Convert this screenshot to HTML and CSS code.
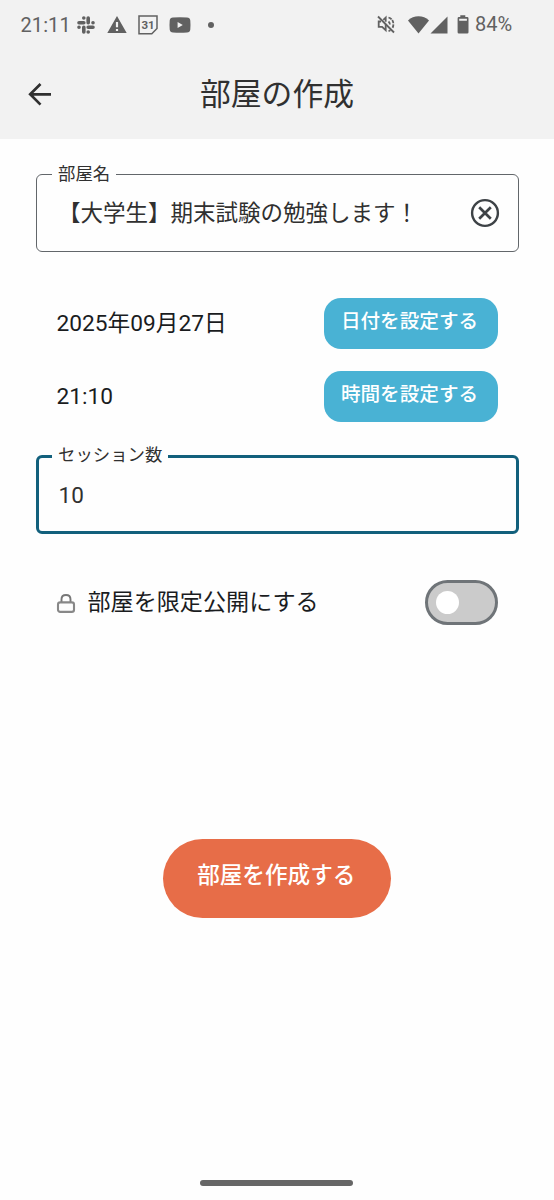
FILE: index.html
```html
<!DOCTYPE html>
<html lang="ja">
<head>
<meta charset="utf-8">
<title>部屋の作成</title>
<link rel="stylesheet" href="styles.css">
</head>
<body>
<div class="screen">
  <header class="top">
    <div class="status">
      <div class="status-left">
        <span class="clock">21:11</span>
        <svg class="i-slack" width="18" height="18" viewBox="0 0 18 18" fill="none" stroke="currentColor" stroke-width="3.6" stroke-linecap="round">
          <path d="M6.800 6.800H2M11.200 6.800V2M11.200 11.200H16M6.800 11.200V16"/>
          <path d="M6.800 2h.01M16 6.800h.01M11.200 16h.01M2 11.200h.01"/>
        </svg>
        <svg class="i-warn" width="20" height="17" viewBox="0 0 20 17"><path fill="currentColor" fill-rule="evenodd" d="M10 0 19.700 17H.3zM8.900 6v5.300h2.200V6zm0 6.900v2.100h2.200v-2.100z"/></svg>
        <svg class="i-cal" width="20" height="20" viewBox="0 0 20 20"><path d="M1 1h18v12.500l-5.200 5.200H1z" fill="none" stroke="currentColor" stroke-width="1.500"/><text x="10" y="14" text-anchor="middle" class="cal-num">31</text></svg>
        <svg class="i-video" width="22" height="16" viewBox="0 0 22 16"><path fill="currentColor" fill-rule="evenodd" d="M4 .6Q11 0 18 .6q3 .2 3.300 3 .4 4.400 0 8.800-.3 2.800-3.300 3-7 .6-14 0-3-.2-3.300-3-.4-4.400 0-8.800Q1 .8 4 .6zM8.600 5v6l5.200-3z"/></svg>
        <span class="dot"></span>
      </div>
      <div class="status-right">
        <svg class="i-mute" width="18" height="19" viewBox="0 0 18 19" fill="none" stroke="currentColor" stroke-width="1.800">
          <path d="M1 1.500 17 17.500"/>
          <path d="M4 6.500H1.700v5.300h3.400l3.600 3.400V9.300M6.300 4.800l2.400-2.200v4.200"/>
          <path d="M11.500 6.500q1.400 1.200 1.400 3"/>
          <path d="M11.500 2.500q4.900 1.500 4.900 6.800 0 2-.9 3.500M11.500 16.200l2-.9" stroke-dasharray="3.500 1"/>
        </svg>
        <svg class="i-wifi" width="21" height="18" viewBox="0 0 21 18"><path fill="currentColor" d="M0 4.400Q4.500.3 10.500.3T21 4.400L10.500 17.500z"/></svg>
        <svg class="i-cell" width="18" height="18" viewBox="0 0 18 18"><path fill="currentColor" d="M17.500.5v17H.5z"/></svg>
        <svg class="i-batt" width="12" height="19" viewBox="0 0 12 19"><path fill="currentColor" fill-rule="evenodd" d="M3.300.3h5v1.800h1.900q1.300 0 1.300 1.300v13.900q0 1.300-1.300 1.300H1.900Q.6 18.600.6 17.300V3.400q0-1.300 1.300-1.300h1.400zM2.200 3.800v2h7.700v-2z"/></svg>
        <span class="percent">84%</span>
      </div>
    </div>
    <div class="appbar">
      <svg class="back" width="24" height="24" viewBox="0 0 24 24" fill="none" stroke="currentColor" stroke-width="2.700"><path d="M23 12.300H2.300M12.500 2 2.200 12.300 12.500 22.600"/></svg>
      <h1 class="title">部屋の作成</h1>
    </div>
  </header>
  <main class="form">
    <div class="field">
      <span class="label">部屋名</span>
      <span class="value">【大学生】期末試験の勉強します！</span>
      <svg class="clear" width="30" height="30" viewBox="0 0 30 30" fill="none" stroke="currentColor" stroke-width="2.400"><circle cx="15" cy="15" r="12.900"/><path d="m9.200 9.200 11.600 11.600M20.800 9.200 9.200 20.800" stroke-width="2.700"/></svg>
    </div>
    <div class="row row-date">
      <span class="when">2025年09月27日</span>
      <button class="pick">日付を設定する</button>
    </div>
    <div class="row row-time">
      <span class="when">21:10</span>
      <button class="pick">時間を設定する</button>
    </div>
    <div class="field field-active">
      <span class="label">セッション数</span>
      <span class="value">10</span>
    </div>
    <div class="row row-private">
      <svg class="lock" width="20" height="22" viewBox="0 0 20 22" fill="none"><path d="M5.500 10V7.300Q5.500 3 10 3t4.500 4.300V10" stroke="#777" stroke-width="1.900"/><rect x="2" y="10.400" width="16" height="9.500" rx="2.200" stroke="#888" stroke-width="2.100"/></svg>
      <span class="private-text">部屋を限定公開にする</span>
      <span class="switch"><span class="knob"></span></span>
    </div>
    <button class="create">部屋を作成する</button>
  </main>
  <div class="nav"></div>
</div>
</body>
</html>
```
FILE: styles.css
```css
* { box-sizing: border-box; }
body {
  margin: 0;
  background: #fefefe;
  font-family: Roboto, "Noto Sans CJK JP", sans-serif;
  color: #1a1c1e;
}
.screen {
  height: 1200px;
  display: flex;
  flex-direction: column;
  overflow: hidden;
}
.top { height: 139px; background: #f2f2f2; flex: none; }
.status {
  height: 49px;
  padding: 0 42px 0 20.500px;
  display: flex;
  justify-content: space-between;
  color: #616161;
}
.status-left, .status-right { display: flex; align-items: center; }
.clock { width: 50px; font-size: 20px; letter-spacing: .1px; line-height: 24px; white-space: nowrap; }
.i-slack { margin-left: 6.500px; }
.i-warn { margin-left: 12px; }
.i-cal { margin-left: 11px; }
.cal-num { font: 700 11.500px Roboto, sans-serif; fill: currentColor; }
.i-video { margin-left: 10.500px; }
.dot { width: 6px; height: 6px; border-radius: 50%; background: #616161; margin-left: 17px; }
.i-wifi { margin-left: 13px; }
.i-cell { margin-left: 1px; }
.i-batt { margin-left: 9px; }
.percent { margin-left: 6px; font-size: 20px; width: 37px; line-height: 24px; padding-bottom: 1px; white-space: nowrap; }
.appbar {
  display: grid;
  grid-template-columns: 60px 1fr 60px;
  align-items: center;
  height: 90px;
  color: #303030;
}
.back { margin-left: 27.500px; }
.title {
  margin: 0;
  padding-top: 1px;
  font-size: 30.800px;
  line-height: 40px;
  font-weight: 400;
  text-align: center;
}
.form { flex: 1; display: flex; flex-direction: column; padding: 35px 35px 0 35.500px; }
.field {
  position: relative;
  height: 78px;
  border: 1.500px solid #62666a;
  border-radius: 6px;
  display: flex;
  align-items: center;
  justify-content: space-between;
  padding: 0 18px 0 21.500px;
  flex: none;
  color: #303030;
}
.field .label {
  position: absolute;
  left: 15.500px;
  top: -13px;
  padding: 0 6px;
  background: #fefefe;
  font-size: 17.400px;
  line-height: 24px;
}
.value { font-size: 22.500px; line-height: 30px; white-space: nowrap; }
.clear { color: #3d4246; }
.row { display: flex; align-items: center; padding: 0 21px; }
.row-date { margin-top: 46px; height: 51px; }
.row-time { margin-top: 22px; height: 51px; }
.when { flex: 1; font-size: 22.700px; line-height: 30px; }
.pick {
  width: 174px;
  height: 51px;
  padding: 0 3px 3px 0;
  border: 0;
  border-radius: 17px;
  background: #49b2d4;
  color: #fff;
  font: 500 19.600px/28px Roboto, "Noto Sans CJK JP", sans-serif;
}
.field-active { height: 79px; margin-top: 33px; border: 3px solid #12607c; padding-left: 20px; }
.field-active .label { left: 13.500px; top: -15px; }
.field-active .value { padding-top: 1px; }
.row-private { margin-top: 46px; height: 45px; }
.lock { margin: 0 12px 0 -1px; }
.private-text { flex: 1; font-size: 23.100px; line-height: 30px; padding-top: 1px; }
.switch {
  width: 73px;
  height: 45px;
  border: 3px solid #6f7478;
  border-radius: 23px;
  background: #cbcbcb;
  display: flex;
  align-items: center;
  padding-left: 8px;
}
.knob { width: 23px; height: 23px; border-radius: 50%; background: #fff; }
.create {
  align-self: center;
  margin-top: 214px;
  width: 228px;
  height: 79px;
  padding: 0 2px 5px 0;
  border: 0;
  border-radius: 40px;
  background: #e76d48;
  color: #fff;
  font: 500 22.600px/30px Roboto, "Noto Sans CJK JP", sans-serif;
}
.nav {
  width: 153px;
  height: 6px;
  border-radius: 3px;
  background: #666;
  align-self: center;
  margin: 0 1px 14px 0;
  flex: none;
}
```
